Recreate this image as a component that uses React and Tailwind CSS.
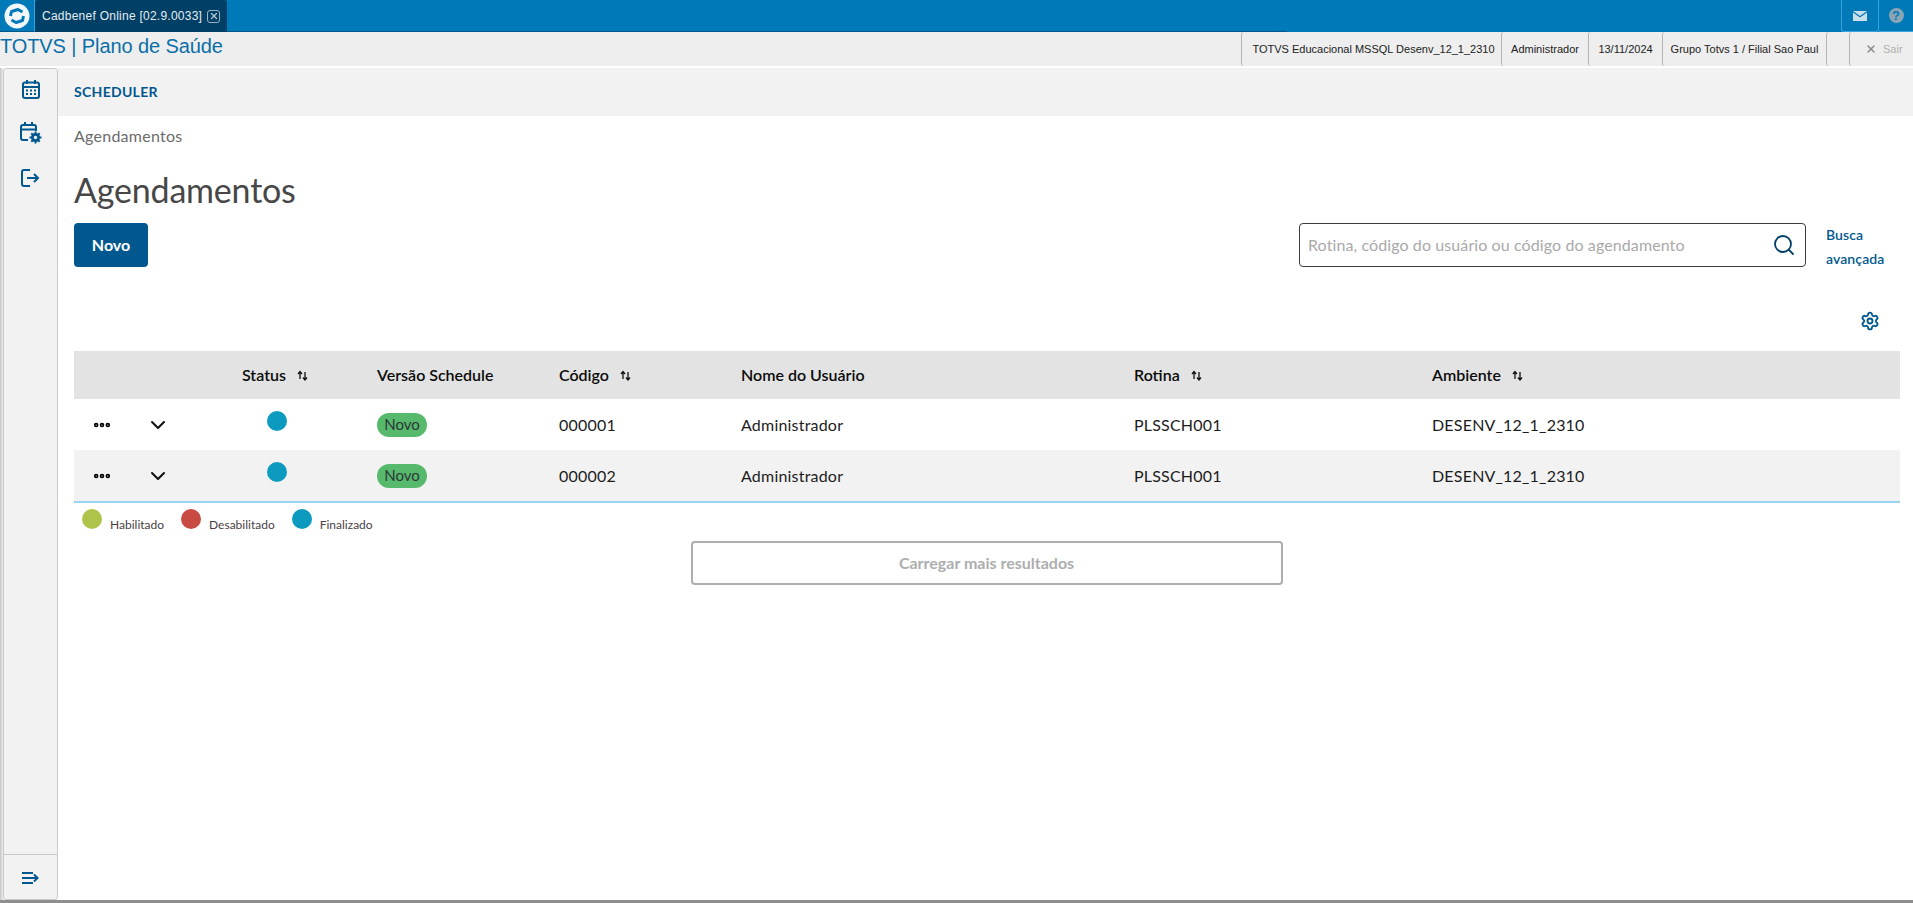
import React from 'react';
import { Search, Settings, ChevronDown, Ellipsis, X } from 'lucide-react';

function SortIcon() {
  return (
    <svg width="11" height="11" viewBox="0 0 11 11" className="ml-[11px] mt-px shrink-0" fill="none" stroke="#111" strokeWidth="1.3">
      <path d="M3 9V2M1 4l2-2.500L5 4" />
      <path d="M8 2v8M6 7.500l2 2.500 2-2.500" />
    </svg>
  );
}

function CalendarIcon() {
  return (
    <svg width="18" height="19" viewBox="0 0 18 19" className="mt-[11px] shrink-0" fill="none">
      <rect x="1" y="2.500" width="16" height="15.500" rx="2" stroke="#00588f" strokeWidth="2" />
      <path d="M1 7h16" stroke="#00588f" strokeWidth="2" />
      <path d="M5 0v4M13 0v4" stroke="#00588f" strokeWidth="2" />
      <path d="M4 9.500h2v2H4zM8 9.500h2v2H8zM12 9.500h2v2h-2zM4 13h2v2H4zM8 13h2v2H8zM12 13h2v2h-2z" fill="#00588f" />
    </svg>
  );
}

function CalendarGearIcon() {
  return (
    <svg width="22" height="22" viewBox="0 0 22 22" className="mt-[23px] ml-[1px] shrink-0" fill="none">
      <path d="M8 18H3a2 2 0 0 1-2-2V5a2 2 0 0 1 2-2h11a2 2 0 0 1 2 2v4" stroke="#00588f" strokeWidth="2" />
      <path d="M1 7.500h15M5 0v4M12 0v4" stroke="#00588f" strokeWidth="2" />
      <circle cx="15.500" cy="15.500" r="4.500" fill="#00588f" />
      <path d="M15.500 9.500v12M9.500 15.500h12M11.300 11.300l8.400 8.400M19.700 11.300l-8.400 8.400" stroke="#00588f" strokeWidth="2" />
      <circle cx="15.500" cy="15.500" r="1.700" fill="#f2f2f2" />
    </svg>
  );
}

function ExitIcon() {
  return (
    <svg width="19" height="18" viewBox="0 0 19 18" className="mt-[25px] shrink-0" fill="none" stroke="#00588f" strokeWidth="2">
      <path d="M9 1H3a2 2 0 0 0-2 2v12a2 2 0 0 0 2 2h6" />
      <path d="M6 9h11M13 5l4 4-4 4" />
    </svg>
  );
}

function HeadCell({ width, sort, children }) {
  return (
    <div className={`${width} flex items-center font-semibold text-[16px] text-[#0b0b0b]`}>
      {children}
      {sort && <SortIcon />}
    </div>
  );
}

function Row({ code, shaded }) {
  return (
    <div className={`flex h-[51px] items-center text-[16px] tracking-[0.2px] text-[#1c1c1c] ${shaded ? 'bg-[#f2f2f2]' : 'bg-white'}`}>
      <div className="w-[74px] pl-[18px] flex items-center">
        <Ellipsis className="w-5 h-5 text-black" strokeWidth={3.5} />
      </div>
      <div className="w-[94px] flex items-center">
        <ChevronDown className="w-6 h-6 -ml-[2px] text-[#111]" strokeWidth={2} />
      </div>
      <div className="w-[135px] pl-[25px]">
        <div className="w-5 h-5 rounded-full bg-[#0c9abe] -mt-[7px]"></div>
      </div>
      <div className="w-[182px]">
        <span className="inline-flex items-center justify-center w-[50px] h-6 rounded-full bg-[#56b96c] text-[#2c3739] text-[15px] tracking-normal">Novo</span>
      </div>
      <div className="w-[182px]">{code}</div>
      <div className="w-[393px]">Administrador</div>
      <div className="w-[298px]">PLSSCH001</div>
      <div>DESENV_12_1_2310</div>
    </div>
  );
}

function Legend({ color, label }) {
  return (
    <div className="flex items-start mr-[17px]">
      <div className={`w-5 h-5 rounded-full ${color}`}></div>
      <span className="ml-2 mt-[8px] text-[12px] leading-[16px] text-[#4a4046]">{label}</span>
    </div>
  );
}

function InfoCell({ width, children }) {
  return (
    <div className={`${width} h-full flex items-center justify-center border-l border-[#b5b5b5] rounded-l-[3px] whitespace-nowrap`}>
      {children}
    </div>
  );
}

export default function App() {
  return (
    <div className="w-[1913px] h-[903px] overflow-hidden bg-white flex flex-col font-['Lato',sans-serif]">
      {/* top blue bar */}
      <div className="h-[32px] bg-[#0079b8] flex shrink-0 font-['Liberation_Sans',sans-serif]">
        <div className="w-[35px] h-full flex items-center justify-center border-r border-[#38a3dc] border-b border-b-[#00588a]">
          <svg width="26" height="26" viewBox="0 0 26 26" fill="none">
            <circle cx="13" cy="13" r="12.500" fill="#f2f7fa" />
            <path d="M6.500 13 7.500 8.500 14 6.500 18.500 9" stroke="#0079b8" strokeWidth="3" strokeLinejoin="round" />
            <path d="M19.500 13 18.500 17.500 12 19.500 7.500 17" stroke="#0079b8" strokeWidth="3" strokeLinejoin="round" />
          </svg>
        </div>
        <div className="w-[192px] h-full bg-[#003f66] rounded-t-[2px] flex items-center pl-[7px] text-[#e6edf2] text-[12px] tracking-[0.25px]">
          Cadbenef Online [02.9.0033]
          <span className="ml-[5px] w-[13px] h-[13px] rounded-[3px] border border-[#9fb4c2] flex items-center justify-center">
            <X className="w-[10px] h-[10px] text-[#b9c8d2]" strokeWidth={3} />
          </span>
        </div>
        <div className="w-[1060px] h-full border-b border-[#00588a]"></div>
        <div className="flex-1"></div>
        <div className="w-[38px] h-full border-x border-b border-[#38a3dc] rounded-b-[3px] flex items-center justify-center">
          <svg width="14" height="10" viewBox="0 0 14 10">
            <path d="M0 0h14L7 5z" fill="#c9dfec" />
            <path d="M0 1.500 7 6.500 14 1.500V10H0z" fill="#c9dfec" />
          </svg>
        </div>
        <div className="w-[34px] h-full border-b border-[#38a3dc] flex items-center justify-center">
          <span className="w-[15px] h-[15px] rounded-full bg-[#8aa5b5] text-[#0079b8] text-[13px] font-bold flex items-center justify-center">?</span>
        </div>
      </div>

      {/* system bar */}
      <div className="h-[34px] bg-[#eeeeee] flex items-center shrink-0 font-['Liberation_Sans',sans-serif]">
        <div className="text-[#0a6fa8] text-[20px] leading-[24px] -mt-[6px] tracking-[-0.1px]">TOTVS | Plano de Saúde</div>
        <div className="flex-1"></div>
        <div className="flex h-full items-center text-[11px] text-[#222]">
          <InfoCell width="w-[260px] pl-[4px]">TOTVS Educacional MSSQL Desenv_12_1_2310</InfoCell>
          <InfoCell width="w-[87px]">Administrador</InfoCell>
          <InfoCell width="w-[74px]">13/11/2024</InfoCell>
          <InfoCell width="w-[164px]">Grupo Totvs 1 / Filial Sao Paul</InfoCell>
          <div className="w-[23px] h-full border-l border-[#b5b5b5] rounded-l-[3px]"></div>
          <div className="w-[64px] h-full border-l border-[#b5b5b5] rounded-l-[3px] flex items-center pl-[15px] text-[#b0b0b0]">
            <X className="w-[12px] h-[12px] text-[#8c8c8c] mr-[6px]" strokeWidth={3} />
            Sair
          </div>
        </div>
      </div>

      <div className="flex-1 flex min-h-0 pt-[2px]">
        {/* side menu */}
        <div className="w-[58px] pl-[3px] bg-gradient-to-r from-[#c4c4c4] to-[#ffffff] to-[4px] shrink-0 flex">
          <div className="w-[55px] bg-[#f2f2f2] border border-[#c9c9c9] rounded-[3px] flex flex-col">
            <div className="flex-1 flex flex-col items-center">
              <CalendarIcon />
              <CalendarGearIcon />
              <ExitIcon />
            </div>
            <div className="h-[45px] pt-[2px] border-t border-[#c9c9c9] flex items-center justify-center">
              <svg width="18" height="14" viewBox="0 0 18 14" fill="none" stroke="#00588f" strokeWidth="2">
                <path d="M0 2h11M0 7h15M0 12h11" />
                <path d="M12 3.500 15.500 7 12 10.500" />
              </svg>
            </div>
          </div>
        </div>

        {/* main */}
        <div className="flex-1 flex flex-col min-w-0">
          <div className="h-[48px] bg-[#f2f2f2] flex items-center pl-[16px] pb-[2px] text-[14px] tracking-[0.3px] font-bold text-[#00588f] shrink-0">SCHEDULER</div>
          <div className="pl-[16px] pr-[13px] flex flex-col">
            <div className="mt-[8px] h-[24px] flex items-center text-[16px] tracking-[0.25px] text-[#6b6b6b]">Agendamentos</div>
            <h1 className="mt-[19px] h-[44px] flex items-center text-[34px] tracking-[-0.2px] font-normal text-[#474747]">Agendamentos</h1>
            <div className="mt-[12px] h-[44px] flex items-start">
              <button className="w-[74px] h-[44px] rounded-[4px] bg-[#00588f] text-white text-[16px] font-bold">Novo</button>
              <div className="flex-1"></div>
              <div className="w-[507px] h-[44px] border border-[#3d3d3d] rounded-[4px] flex items-center pl-[8px] pr-[9px] text-[16px] tracking-[0.1px] text-[#a9a9a9]">
                <span className="flex-1">Rotina, código do usuário ou código do agendamento</span>
                <Search className="w-6 h-6 text-[#003f66]" strokeWidth={1.8} />
              </div>
              <div className="w-[94px] pl-[20px] pr-[8px] text-[14px] tracking-[0.1px] leading-[24px] font-semibold text-[#00588f]">Busca avançada</div>
            </div>
            <div className="mt-[44px] h-[20px] flex justify-end pr-[20px]">
              <Settings className="w-5 h-5 text-[#00588f]" strokeWidth={2.2} />
            </div>
            <div className="mt-[20px]">
              <div className="h-[48px] bg-[#e3e3e3] flex items-center">
                <div className="w-[168px]"></div>
                <HeadCell width="w-[135px]" sort>Status</HeadCell>
                <HeadCell width="w-[182px]">Versão Schedule</HeadCell>
                <HeadCell width="w-[182px]" sort>Código</HeadCell>
                <HeadCell width="w-[393px]">Nome do Usuário</HeadCell>
                <HeadCell width="w-[298px]" sort>Rotina</HeadCell>
                <HeadCell width="w-[200px]" sort>Ambiente</HeadCell>
              </div>
              <Row code="000001" />
              <Row code="000002" shaded />
              <div className="h-[2px] bg-[#9bd3f5]"></div>
            </div>
            <div className="mt-[6px] pl-[8px] flex h-[27px]">
              <Legend color="bg-[#aec34a]" label="Habilitado" />
              <Legend color="bg-[#c84a43]" label="Desabilitado" />
              <Legend color="bg-[#0c9abe]" label="Finalizado" />
            </div>
            <div className="mt-[5px] flex justify-center pr-[1px]">
              <button className="w-[592px] h-[44px] border-2 border-[#aeaeae] rounded-[4px] text-[#aeaeae] text-[16px] font-bold">Carregar mais resultados</button>
            </div>
          </div>
        </div>
      </div>
      <div className="h-[3px] bg-[#8e8e8e] shrink-0"></div>
    </div>
  );
}
